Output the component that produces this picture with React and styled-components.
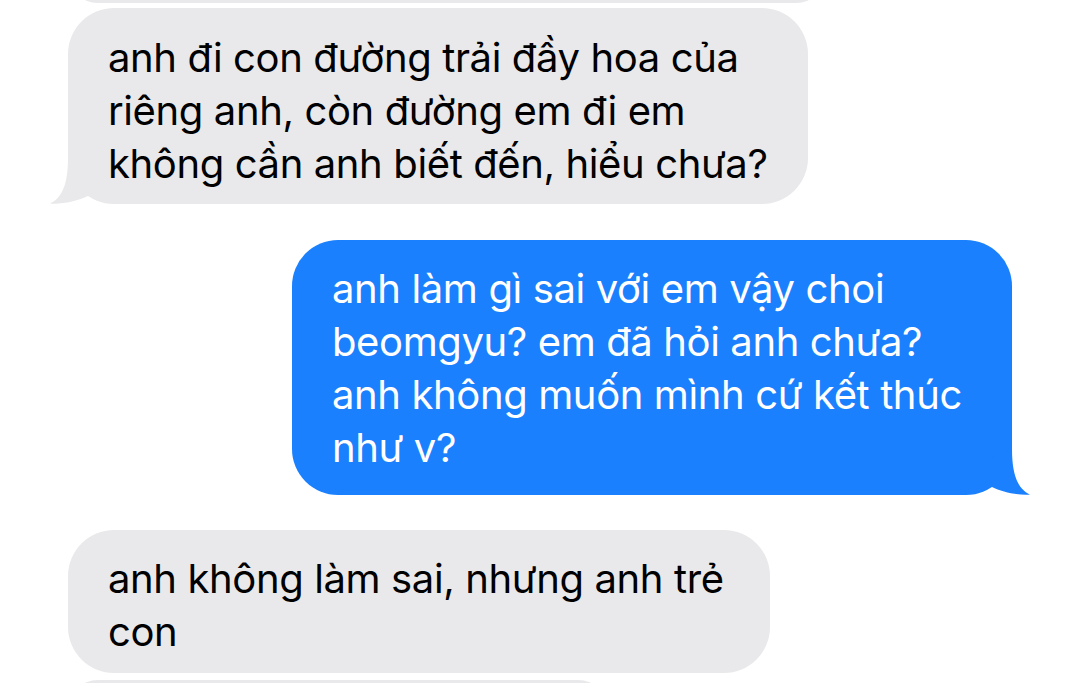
import React from "react";
import styled, { createGlobalStyle } from "styled-components";

const GlobalStyle = createGlobalStyle`
  html, body {
    margin: 0;
    padding: 0;
    background: #ffffff;
  }
  body {
    font-family: "Inter", "Noto Sans", "Liberation Sans", sans-serif;
    -webkit-font-smoothing: antialiased;
  }
`;

const Screen = styled.div`
  width: 1080px;
  height: 683px;
  overflow: hidden;
  background: #ffffff;
  display: flex;
  flex-direction: column;
  padding: 0 68px;
  box-sizing: border-box;
`;

const Bubble = styled.div`
  position: relative;
  flex: none;
  box-sizing: border-box;
  width: ${(p) => p.$w}px;
  margin-top: ${(p) => p.$mt || 0}px;
  align-self: ${(p) => (p.$me ? "flex-end" : "flex-start")};
  background: ${(p) => (p.$me ? "#1a80fd" : "#e9e9eb")};
  color: ${(p) => (p.$me ? "#ffffff" : "#000000")};
  border-radius: 46px;
  padding: ${(p) => p.$pad || "18px 40px 21px"};
  font-size: 40px;
  line-height: 53px;
  letter-spacing: -0.38px;
`;

const Stub = styled.div`
  flex: none;
  width: ${(p) => p.$w}px;
  height: 60px;
  margin-top: ${(p) => p.$mt}px;
  background: #e9e9eb;
  border-radius: 46px;
`;

const Line = styled.span`
  display: block;
  white-space: nowrap;
`;

const TailSvg = styled.svg`
  position: absolute;
  bottom: 0;
  width: 60px;
  height: 50px;
  ${(p) => (p.$me ? "right: -20px;" : "left: -20px;")}
`;

const Tail = ({ me }) => (
  <TailSvg $me={me} viewBox="0 0 60 50">
    {me ? (
      <path d="M40 4 C40 34 48 45 58 49.5 C46 50.5 30 47 20 42 L14 16 Z" fill="#1a80fd" />
    ) : (
      <path d="M20 4 C20 34 12 45 2 49.5 C14 50.5 30 47 40 42 L46 16 Z" fill="#e9e9eb" />
    )}
  </TailSvg>
);

const App = () => {
  return (
    <>
      <GlobalStyle />
      <Screen>
        <Stub $w={758} $mt={-57} />
        <Bubble $w={740} $mt={5} $pad="23px 40px 14px">
          <Line>anh đi con đường trải đầy hoa của</Line>
          <Line>riêng anh, còn đường em đi em</Line>
          <Line>không cần anh biết đến, hiểu chưa?</Line>
          <Tail />
        </Bubble>
        <Bubble $w={720} $me $mt={36} $pad="22px 40px 21px">
          <Line>anh làm gì sai với em vậy choi</Line>
          <Line>beomgyu? em đã hỏi anh chưa?</Line>
          <Line>anh không muốn mình cứ kết thúc</Line>
          <Line>như v?</Line>
          <Tail me />
        </Bubble>
        <Bubble $w={702} $mt={35} $pad="22px 40px 15px">
          <Line>anh không làm sai, nhưng anh trẻ</Line>
          <Line>con</Line>
        </Bubble>
        <Stub $w={540} $mt={7} />
      </Screen>
    </>
  );
};

export default App;
